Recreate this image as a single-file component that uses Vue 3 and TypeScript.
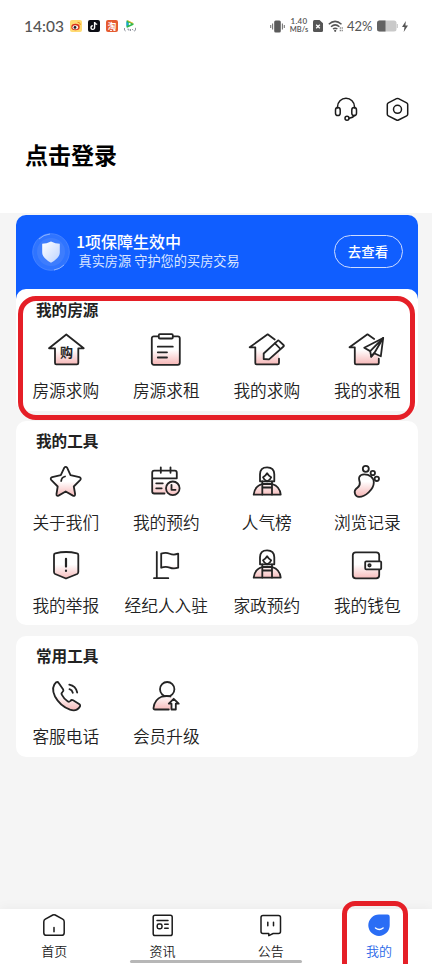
<script setup lang="ts">
interface Entry {
  icon: string
  label: string
}

interface Section {
  title: string
  name: string
  items: Entry[]
}

const sections: Section[] = [
  {
    title: '我的房源',
    name: 'listings',
    items: [
      { icon: 'buy', label: '房源求购' },
      { icon: 'clipboard', label: '房源求租' },
      { icon: 'pencil', label: '我的求购' },
      { icon: 'plane', label: '我的求租' },
    ],
  },
  {
    title: '我的工具',
    name: 'tools',
    items: [
      { icon: 'star', label: '关于我们' },
      { icon: 'calendar', label: '我的预约' },
      { icon: 'person', label: '人气榜' },
      { icon: 'foot', label: '浏览记录' },
      { icon: 'report', label: '我的举报' },
      { icon: 'flag', label: '经纪人入驻' },
      { icon: 'person', label: '家政预约' },
      { icon: 'wallet', label: '我的钱包' },
    ],
  },
  {
    title: '常用工具',
    name: 'common',
    items: [
      { icon: 'phone', label: '客服电话' },
      { icon: 'member', label: '会员升级' },
    ],
  },
]

const tabs: Entry[] = [
  { icon: 'home', label: '首页' },
  { icon: 'news', label: '资讯' },
  { icon: 'notice', label: '公告' },
  { icon: 'mine', label: '我的' },
]
</script>

<template>
  <div class="page">
    <svg class="defs" width="0" height="0">
      <defs>
        <linearGradient id="blush" gradientUnits="userSpaceOnUse" x1="0" y1="4" x2="0" y2="35">
          <stop offset="0.5" stop-color="#fff" />
          <stop offset="1" stop-color="#f6b4b4" />
        </linearGradient>
        <linearGradient id="shieldFill" x1="0" y1="0" x2="1" y2="1">
          <stop offset="0" stop-color="#fff" />
          <stop offset="1" stop-color="#bdd3ff" />
        </linearGradient>
      </defs>
    </svg>

    <header class="top">
      <div class="status">
        <span class="clock">14:03</span>
        <div class="apps">
          <svg class="app" viewBox="0 0 12 12">
            <rect width="12" height="12" rx="2" fill="#ffdb72" />
            <ellipse cx="5.5" cy="7" rx="4.2" ry="3.3" fill="#d9321c" />
            <ellipse cx="5.3" cy="7.3" rx="2.8" ry="2" fill="#fff" />
            <circle cx="5" cy="7.4" r="1.4" fill="#222" />
            <path d="M7.5 2.3q3-.3 2.8 2.7" fill="none" stroke="#ef8b1f" stroke-width="1" />
          </svg>
          <svg class="app" viewBox="0 0 12 12">
            <rect width="12" height="12" rx="2" fill="#0c0d14" />
            <path d="M6.6 2v5.6a1.8 1.8 0 1 1-1.8-1.8M6.6 2.2q.4 2 2.6 2.2" fill="none" stroke="#fff" stroke-width="1.4" />
          </svg>
          <svg class="app" viewBox="0 0 12 12">
            <rect width="12" height="12" rx="2" fill="#e55b30" />
            <text class="tao" x="6" y="8.6" text-anchor="middle">淘</text>
            <path d="M4 10.4h2M7.5 10.4h2" stroke="#fff" stroke-width="1" />
          </svg>
          <svg class="app" viewBox="0 0 12 12">
            <path d="M2.500 1.300q0-1.300 1.200-.8l5.500 2.800q1.300.8 0 1.600l-5.500 2.600q-1.200.5-1.200-.8z" fill="#2db84b" />
            <path d="M2.500 1.300v5.400l2.300-2.800z" fill="#1aa0e8" />
            <path d="M4.800 2.500l2.500 1.400-2.500 1.400z" fill="#fff" />
            <path d="M3.700.6l5.300 2.700" stroke="#f7b52a" stroke-width=".9" />
            <path d="M.5 8v2.200l1.200.8M3.400 9.200h1.500v1.500M6.500 9v2M8.200 9l1 1.300M11.500 7.800v2.400l-1.500 1" fill="none" stroke="#868a96" stroke-width=".9" />
          </svg>
        </div>
        <div class="signals">
          <svg width="15" height="13" viewBox="0 0 15 13">
            <rect x="4.200" y=".4" width="6.600" height="12.200" rx="1.500" fill="#5b5b5b" />
            <path d="M2.600 3.500v6M.7 5v3M12.400 3.500v6M14.300 5v3" stroke="#777" stroke-width="1.100" />
          </svg>
          <span class="speed"><b>1.40</b><b>MB/s</b></span>
          <svg class="sim" width="10" height="12" viewBox="0 0 10 12">
            <path d="M1.500 0h5L10 3.200v7.300Q10 12 8.500 12h-7Q0 12 0 10.500v-9Q0 0 1.500 0z" fill="#555" />
            <path d="M3.200 4.700l3.600 3.600M6.800 4.700l-3.600 3.600" stroke="#fff" stroke-width="1.300" />
          </svg>
          <svg class="wifi" width="15" height="12" viewBox="0 0 15 12">
            <path d="M.8 4.200q6.200-5.600 12.700 0M3 6.700q4.200-3.600 8.400 0M5 9q2.200-1.700 4.400 0" fill="none" stroke="#555" stroke-width="1.500" />
            <circle cx="7.200" cy="10.800" r="1.100" fill="#555" />
            <path d="M12.300 7.300v1.500M12.300 9.800v1.500M14.200 7.300v1.500M14.200 9.800v1.500" stroke="#777" stroke-width="1.100" />
          </svg>
          <span class="percent">42%</span>
          <svg class="battery" width="21" height="12" viewBox="0 0 21 12">
            <rect x="0" y=".5" width="19.500" height="11" rx="2.500" fill="#c9c9c9" />
            <path d="M8.500.5v11h-6Q0 11.500 0 9V3Q0 .5 2.500.5z" fill="#626262" />
            <path d="M20.300 4v4" stroke="#c9c9c9" stroke-width="1.200" />
          </svg>
          <svg class="bolt" width="6" height="11" viewBox="0 0 6 11">
            <path d="M3.800 0L0 6h2.500L1.700 11 6 4.600H3.400z" fill="#555" />
          </svg>
        </div>
      </div>

      <div class="actions">
        <svg class="line" width="24" height="25" viewBox="0 0 24 25">
          <path d="M3.500 11V9.700a8.500 8.500 0 0 1 17 0V11" />
          <rect x="1.500" y="10.600" width="4.700" height="8" rx="2.350" />
          <rect x="17.800" y="10.600" width="4.700" height="8" rx="2.350" />
          <circle cx="13" cy="21.300" r="2" />
          <path d="M20.500 18.500q-1.500 2.300-5.300 2.800" />
        </svg>
        <svg class="line" width="24" height="25" viewBox="0 0 24 25">
          <path d="M10.500 1.700q1-.5 2 0l8.200 4.200q1 .5 1 1.600v9.800q0 1-1 1.500l-8.200 4.200q-1 .5-2 0l-8.200-4.200q-1-.5-1-1.500V7.500q0-1.100 1-1.600z" />
          <circle cx="11.500" cy="12.300" r="4" />
        </svg>
      </div>
      <h1 class="login">点击登录</h1>
    </header>

    <main class="content">
      <section class="banner">
        <svg class="badge" width="38" height="38" viewBox="0 0 38 38">
          <circle cx="19" cy="19" r="18.300" fill="#2f74ff" stroke="#4c87ff" stroke-width=".8" />
          <circle cx="19" cy="19" r="14" fill="#4a83fb" opacity=".6" />
          <path d="M7 6a18 18 0 0 1 11-5M22 37a18 18 0 0 0 10-5" fill="none" stroke="#8db3ff" stroke-width="1" />
          <path d="M19 8.500q4.500 2.200 8.800 2.300v8.700q0 5.500-8.800 10.200-8.800-4.700-8.800-10.200v-8.700q4.300-.1 8.800-2.300z" fill="url(#shieldFill)" />
        </svg>
        <div class="promise">
          <strong>1项保障生效中</strong>
          <span>真实房源 守护您的买房交易</span>
        </div>
        <button class="check">去查看</button>
      </section>

      <section v-for="section in sections" :key="section.name" class="card" :class="section.name">
        <h2>{{ section.title }}</h2>
        <div class="grid">
          <div v-for="item in section.items" :key="item.label" class="item">
            <svg class="icon" width="40" height="40" viewBox="0 0 40 40">
              <template v-if="item.icon === 'buy'">
                <path class="fill" d="M20.300 4.500L3 18.300h6v14.700q0 1.300 1.300 1.300H31q1.300 0 1.300-1.300V18.300h5.400z" />
                <text class="glyph" x="20.500" y="27.300" text-anchor="middle">购</text>
              </template>
              <template v-else-if="item.icon === 'clipboard'">
                <rect class="fill" x="5.800" y="6.300" width="28" height="28.500" rx="2" />
                <rect x="12.800" y="4.200" width="14" height="4.300" rx="1" fill="#fff" />
                <path d="M11.800 16.700h15M11.800 22.300H21M11.800 27.500H21" />
              </template>
              <template v-else-if="item.icon === 'pencil'">
                <path class="blush" d="M20.700 4.500L3 17.300h5.300v17H32V17z" />
                <path class="gap" d="M28.500 9L34 19" />
                <path d="M27.700 9.500l-7-5.200L2.700 17.300h5.600V33q0 1.300 1.300 1.300h21q1.400 0 1.400-1.300v-4.300" />
                <path class="white" d="M16.700 29v-5.500L30.500 10.800q.8-.8 1.600 0l4.400 4.200q.8.800 0 1.500L22 29.300z" />
                <path d="M28 13.300l5 5.200" />
              </template>
              <template v-else-if="item.icon === 'plane'">
                <path class="blush" d="M20.500 4.500L3 17.300h4.800v17h24V17z" />
                <path d="M27.200 8.900l-6.700-4.600L2.500 17.300h5.300V33q0 1.300 1.300 1.300h21.300q1.400 0 1.400-1.300v-4.300" />
                <path class="white" d="M36.200 8l-19 9.700 6 3.400 1 5.600 3-3.500 6.600 3.100z" />
                <path d="M36.200 8l-13 13.100M36.200 8l-9 15.200-3 3.500" />
              </template>
              <template v-else-if="item.icon === 'star'">
                <path class="fill" d="M18.200 5.800q1.500-2 3 0l3.300 7.300 8.800 2.100q2.500 1 .8 3l-6.300 6.300 1.300 7.500q0 2.500-2.200 1.600l-7.200-4.100-7.200 4.100q-2.200.8-2-1.600l1.200-7.500-6.300-6.300q-1.700-2 .8-3l8.600-2.100z" />
                <path d="M15.200 19q.3-3.600 3.800-4.500" />
              </template>
              <template v-else-if="item.icon === 'calendar'">
                <path class="blush" d="M6.200 16.300h24.600v15H6.200z" />
                <path d="M18.500 31.500H8.200q-2 0-2-2V10.700q0-2 2-2h20.600q2 0 2 2v5.600H6.200M14.800 5.300v5.500M24.500 5.300v5.500M10.200 21.300h6.600M10.200 26.300h5.500" />
                <circle class="fill" cx="26.800" cy="26.300" r="6.800" />
                <path d="M25.500 22.800v5h4" />
              </template>
              <template v-else-if="item.icon === 'person'">
                <path class="fill" d="M6.700 32.700q.8-8.500 8.500-10.700h9.900q7.800 2.200 8.600 10.700z" />
                <path class="white" d="M13 19.300v-7q0-7 7.100-7t7.200 7v7z" />
                <path d="M15.300 19.500v13M25 19.500v13M15.300 25.500H25M16 15.300q2.400-1.200 4.100-4 1.700 2.800 4.100 4-1 2.900-4.100 4-3.100-1.100-4.100-4z" />
              </template>
              <template v-else-if="item.icon === 'foot'">
                <circle cx="18.800" cy="6.800" r="3" />
                <circle cx="25.800" cy="11" r="2.200" />
                <circle cx="29.800" cy="16.800" r="2.200" />
                <path class="fill" d="M17.200 12.300C22.500 12.300 26.800 15.500 26.800 20.500C26.800 27.500 18 35 12 34.900C8 34.800 6.500 29.800 8.800 27.200C10.800 25 13.300 24.500 12.800 20.500C12.300 18 11.600 17 12.200 15.300C13 13 15 12.300 17.200 12.300z" />
              </template>
              <template v-else-if="item.icon === 'report'">
                <path class="fill" d="M9.300 8.300q10.700-2.600 21.700 0 1.300.3 1.300 1.600v17.200q0 1.300-1.100 1.900L20 33.500 9.100 29Q8 28.400 8 27.100V9.900q0-1.300 1.300-1.600z" />
                <path class="heavy" d="M20 13.800v7.800M20 25.600v.3" />
              </template>
              <template v-else-if="item.icon === 'flag'">
                <path class="fill" d="M15.200 8.700q4.500-1.800 8.500 0t8.500 0v14q-4.500 1.500-8.500-.1t-8.500.1z" />
                <path d="M10.800 7v26.200M8 33.200h14.300" />
              </template>
              <template v-else-if="item.icon === 'wallet'">
                <rect class="fill" x="5.800" y="7.300" width="26.400" height="26" rx="3" />
                <rect class="white" x="18.200" y="16.300" width="16" height="8" rx="1" />
                <circle cx="22.500" cy="20.300" r="1.200" />
              </template>
              <template v-else-if="item.icon === 'phone'">
                <path class="fill" d="M10.200 6.200q1.600-.7 2.500.8l4.500 6.400q.8 1.500-.8 2.700-1.500 1.200-.5 2.700 2.400 4.500 6 6.700 1.300.8 2.400-.5 1.200-1.600 2.800-.7l6 3.800q1.800 1.200.7 2.700-3 5-9.800 2.900-10-3.800-15-13.200Q4.500 11 10.200 6.200z" />
                <path d="M23.500 13.200q2.700.8 3.300 3.600M23.300 8.700q6.500 1.300 7.900 7.800" />
              </template>
              <template v-else-if="item.icon === 'member'">
                <circle cx="21.200" cy="13.200" r="7.200" fill="#fff" />
                <path class="blush" d="M7.500 33.300q0-9.500 8.500-12.500h9l5 3v9.500z" />
                <path d="M22.800 33.500H9q-1.600 0-1.500-1.500.8-8.500 8.500-11.500 5-1 8.500 0" />
                <path class="white" d="M27.700 22.800l-4.900 4.900h2.700v5.800h4.300v-5.800h2.900z" />
              </template>
            </svg>
            <span>{{ item.label }}</span>
          </div>
        </div>
      </section>
    </main>

    <nav class="tabbar">
      <div v-for="tab in tabs" :key="tab.label" class="tab" :class="{ active: tab.icon === 'mine' }">
        <svg class="line" width="24" height="24" viewBox="0 0 24 24">
          <template v-if="tab.icon === 'home'">
            <path d="M10.800 2q1.200-.6 2.400 0l7.500 4.200q1.500.9 1.500 2.500v11q0 2.600-2.600 2.600H4.400q-2.600 0-2.600-2.600v-11q0-1.600 1.500-2.500zM12 14.500v4.300" />
          </template>
          <template v-else-if="tab.icon === 'news'">
            <rect x="3.200" y="2.200" width="19" height="20.300" rx="1.800" />
            <rect x="7.200" y="11" width="4.800" height="4.800" rx="1.700" />
            <path d="M7 7.500h11M14.700 11.300h3.500M14.700 15.300h3.500" />
          </template>
          <template v-else-if="tab.icon === 'notice'">
            <path d="M4 2.500h15.500q2 0 2 2v14q0 2-2 2h-5.300l-4.400 2.200v-2.200H4q-2 0-2-2V4.500q0-2 2-2zM8.800 9.300v3.500M14.500 9.300v3.500" />
          </template>
          <template v-else>
            <path class="mine" d="M12 1.500h8.500q2.200 0 2.200 2.200v8.500A10.700 10.700 0 1 1 12 1.500z" />
            <path class="smile" d="M8.500 15q3.800 2.800 7.600 0" />
          </template>
        </svg>
        <span>{{ tab.label }}</span>
      </div>
      <i class="pill"></i>
    </nav>

    <i class="mark mark-listings"></i>
    <i class="mark mark-mine"></i>
  </div>
</template>

<style>
body {
  margin: 0;
  background: #f5f5f5;
}
</style>

<style scoped>
.page {
  position: relative;
  display: flex;
  flex-direction: column;
  width: 432px;
  height: 964px;
  overflow: hidden;
  background: #f5f5f5;
  color: #222;
  font-family: "Noto Sans CJK SC", sans-serif;
}
.defs {
  position: absolute;
}
svg {
  display: block;
  flex: none;
}
.top {
  flex: none;
  box-sizing: border-box;
  height: 213px;
  background: #fff;
}
.status {
  display: flex;
  align-items: center;
  box-sizing: border-box;
  height: 52px;
  padding: 0 24px;
  color: #555;
}
.clock {
  width: 46px;
  margin-top: -1px;
  font: 500 15.500px/20px Lato, sans-serif;
  white-space: nowrap;
}
.apps {
  display: flex;
  gap: 6px;
}
.app {
  width: 12px;
  height: 12px;
}
.tao {
  fill: #fff;
  font-size: 8.500px;
  font-weight: 700;
}
.signals {
  display: flex;
  align-items: center;
  margin-left: auto;
}
.speed {
  display: flex;
  flex-direction: column;
  gap: 1px;
  width: 20px;
  margin: -1px 0 0 4px;
  text-align: center;
}
.speed b {
  font: 600 7.500px/7px Lato, sans-serif;
  white-space: nowrap;
}
.speed b:first-child {
  font-size: 8px;
  letter-spacing: 0.300px;
}
.sim {
  margin-left: 4px;
}
.wifi {
  margin-left: 5px;
}
.percent {
  width: 27px;
  margin-left: 4px;
  font: 400 13px/18px Lato, sans-serif;
  white-space: nowrap;
}
.battery {
  margin-left: 3px;
}
.bolt {
  margin-left: 4px;
}
.actions {
  display: flex;
  justify-content: flex-end;
  gap: 28px;
  padding: 45px 22px 0 0;
}
.line {
  fill: none;
  stroke: #1b1b1b;
  stroke-width: 1.500;
  stroke-linecap: round;
  stroke-linejoin: round;
}
.login {
  margin: 15px 0 0 25px;
  color: #000;
  font-size: 23px;
  font-weight: 700;
  line-height: 34px;
}
.content {
  flex: 1;
  width: 402px;
  margin: 2px 0 0 15.500px;
}
.banner {
  display: flex;
  align-items: flex-start;
  box-sizing: border-box;
  height: 84px;
  padding: 18px 15px 0 16px;
  border-radius: 10px 10px 0 0;
  background: #105eff;
  color: #fff;
}
.promise {
  display: flex;
  flex-direction: column;
  margin-left: 6.500px;
  white-space: nowrap;
}
.promise strong {
  margin-top: -4px;
  font-size: 16px;
  font-weight: 500;
  line-height: 24px;
}
.promise span {
  margin: -2px 0 0 2.500px;
  color: #d9e5ff;
  font-size: 13.200px;
  line-height: 20px;
}
.check {
  box-sizing: border-box;
  width: 69px;
  height: 33px;
  margin: 2px 0 0 auto;
  padding: 0;
  border: 1.500px solid #cddcff;
  border-radius: 17px;
  background: transparent;
  color: #fff;
  font: 500 13.500px/29px "Noto Sans CJK SC", sans-serif;
}
.card {
  box-sizing: border-box;
  margin-bottom: 10px;
  border-radius: 10px;
  background: #fff;
}
.card h2 {
  margin: 0 0 1px 20.500px;
  font-size: 15.600px;
  font-weight: 700;
  line-height: 24px;
}
.listings {
  height: 122px;
  margin-top: -10px;
  padding-top: 8px;
}
.tools {
  height: 204px;
  margin-bottom: 11px;
  padding-top: 7px;
}
.common {
  height: 121px;
  padding-top: 7px;
}
.grid {
  display: grid;
  grid-template-columns: repeat(4, 100.500px);
  row-gap: 11px;
  padding-top: 8px;
}
.tools .grid {
  padding-top: 9px;
}
.item {
  display: flex;
  flex-direction: column;
  align-items: center;
  height: 72px;
}
.item span {
  margin-top: 7.500px;
  font-size: 16.700px;
  font-weight: 350;
  line-height: 24px;
  white-space: nowrap;
}
.icon {
  fill: none;
  stroke: #242424;
  stroke-width: 1.800;
  stroke-linecap: round;
  stroke-linejoin: round;
}
.icon .fill {
  fill: url(#blush);
}
.icon .blush {
  fill: url(#blush);
  stroke: none;
}
.icon .white {
  fill: #fff;
}
.icon .gap {
  stroke: #fff;
  stroke-width: 4;
}
.icon .heavy {
  stroke-width: 2.200;
}
.icon .glyph {
  fill: #222;
  stroke: none;
  font-size: 13px;
  font-weight: 700;
}
.tabbar {
  position: relative;
  display: grid;
  grid-template-columns: repeat(4, 108.300px);
  flex: none;
  height: 55px;
  background: #fff;
  box-shadow: 0 -2px 10px rgba(0, 0, 0, 0.040);
}
.tab {
  display: flex;
  flex-direction: column;
  align-items: center;
  padding-top: 4px;
}
.tab span {
  margin-top: 4px;
  font-size: 13px;
  font-weight: 350;
  line-height: 20px;
}
.active {
  color: #2a67e8;
}
.mine {
  fill: #2a6df5;
  stroke: none;
}
.smile {
  stroke: #fff;
}
.pill {
  position: absolute;
  bottom: 1px;
  left: 130px;
  width: 172px;
  height: 3px;
  border-radius: 2px;
  background: #b7b7b7;
}
.mark {
  position: absolute;
  box-sizing: border-box;
  border: 5px solid #e51f27;
}
.mark-listings {
  top: 296px;
  left: 18px;
  width: 397px;
  height: 124px;
  border-radius: 18px;
}
.mark-mine {
  top: 901px;
  left: 342px;
  width: 66px;
  height: 80px;
  border-radius: 13px;
}
</style>
